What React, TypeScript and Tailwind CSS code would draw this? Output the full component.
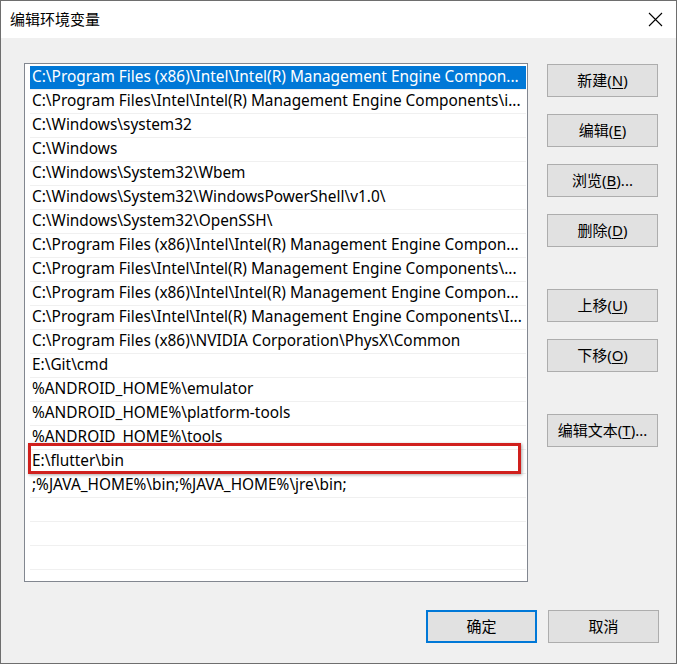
const paths = [
  "C:\\Program Files (x86)\\Intel\\Intel(R) Management Engine Compon...",
  "C:\\Program Files\\Intel\\Intel(R) Management Engine Components\\i...",
  "C:\\Windows\\system32",
  "C:\\Windows",
  "C:\\Windows\\System32\\Wbem",
  "C:\\Windows\\System32\\WindowsPowerShell\\v1.0\\",
  "C:\\Windows\\System32\\OpenSSH\\",
  "C:\\Program Files (x86)\\Intel\\Intel(R) Management Engine Compon...",
  "C:\\Program Files\\Intel\\Intel(R) Management Engine Components\\...",
  "C:\\Program Files (x86)\\Intel\\Intel(R) Management Engine Compon...",
  "C:\\Program Files\\Intel\\Intel(R) Management Engine Components\\I...",
  "C:\\Program Files (x86)\\NVIDIA Corporation\\PhysX\\Common",
  "E:\\Git\\cmd",
  "%ANDROID_HOME%\\emulator",
  "%ANDROID_HOME%\\platform-tools",
  "%ANDROID_HOME%\\tools",
  "E:\\flutter\\bin",
  ";%JAVA_HOME%\\bin;%JAVA_HOME%\\jre\\bin;",
  "",
  "",
  "",
];

const font = { fontFamily: '"Noto Sans", "Noto Sans CJK SC", sans-serif' };

const Btn = ({ children, primary }: { children: React.ReactNode; primary?: boolean }) => (
  <button
    className={
      primary
        ? "w-[111px] h-[33px] shrink-0 bg-[#e1e1e1] border-2 border-[#0078d7] text-[15px] text-black"
        : "w-[111px] h-[33px] shrink-0 bg-[#e1e1e1] border border-[#adadad] text-[15px] text-black"
    }
  >
    {children}
  </button>
);

const U = ({ c }: { c: string }) => <span className="underline underline-offset-2">{c}</span>;

export default function App() {
  return (
    <div
      className="w-[677px] h-[664px] bg-[#f0f0f0] border border-[#6e6e6e] flex flex-col text-black"
      style={font}
    >
      <div className="h-[37px] bg-white flex items-center justify-between pl-[9px] pr-[13px] shrink-0">
        <span className="text-[15px]">编辑环境变量</span>
        <svg width="15" height="15" viewBox="0 0 15 15" className="text-black">
          <path d="M1 1 L14 14 M14 1 L1 14" stroke="currentColor" strokeWidth="1.1" />
        </svg>
      </div>
      <div className="flex-1 flex flex-col pl-[23px] pr-[17px] pt-[25px] pb-[20px]">
        <div className="flex gap-[19px] flex-1">
          <div className="relative w-[504px] h-[519px] shrink-0 bg-white border border-[#828790] pt-[2px] px-[1px] overflow-hidden">
            {paths.map((p, i) => (
              <div
                key={i}
                className={
                  i === 0
                    ? "h-[24px] ml-[4px] bg-[#0078d7] text-white text-[15.4px] leading-[22px] pl-[2px] whitespace-nowrap overflow-hidden border-b border-[#f0f0f0]"
                    : "h-[24px] ml-[4px] text-[15.4px] leading-[22px] pl-[2px] whitespace-nowrap overflow-hidden border-b border-[#f0f0f0]"
                }
              >
                {p}
              </div>
            ))}
            <div className="absolute left-[3px] top-[379px] w-[493px] h-[31px] border-[3px] border-[#d0201d] shadow-[1px_1px_3px_rgba(0,0,0,0.35)]" />
          </div>
          <div className="flex flex-col pt-[1px]">
            <div className="flex flex-col gap-[17px]">
              <Btn>新建(<U c="N" />)</Btn>
              <Btn>编辑(<U c="E" />)</Btn>
              <Btn>浏览(<U c="B" />)...</Btn>
              <Btn>删除(<U c="D" />)</Btn>
            </div>
            <div className="flex flex-col gap-[17px] mt-[42px]">
              <Btn>上移(<U c="U" />)</Btn>
              <Btn>下移(<U c="O" />)</Btn>
            </div>
            <div className="mt-[42px]">
              <Btn>编辑文本(<U c="T" />)...</Btn>
            </div>
          </div>
        </div>
        <div className="flex justify-end gap-[11px] mt-[24px]">
          <Btn primary>确定</Btn>
          <Btn>取消</Btn>
        </div>
      </div>
    </div>
  );
}
